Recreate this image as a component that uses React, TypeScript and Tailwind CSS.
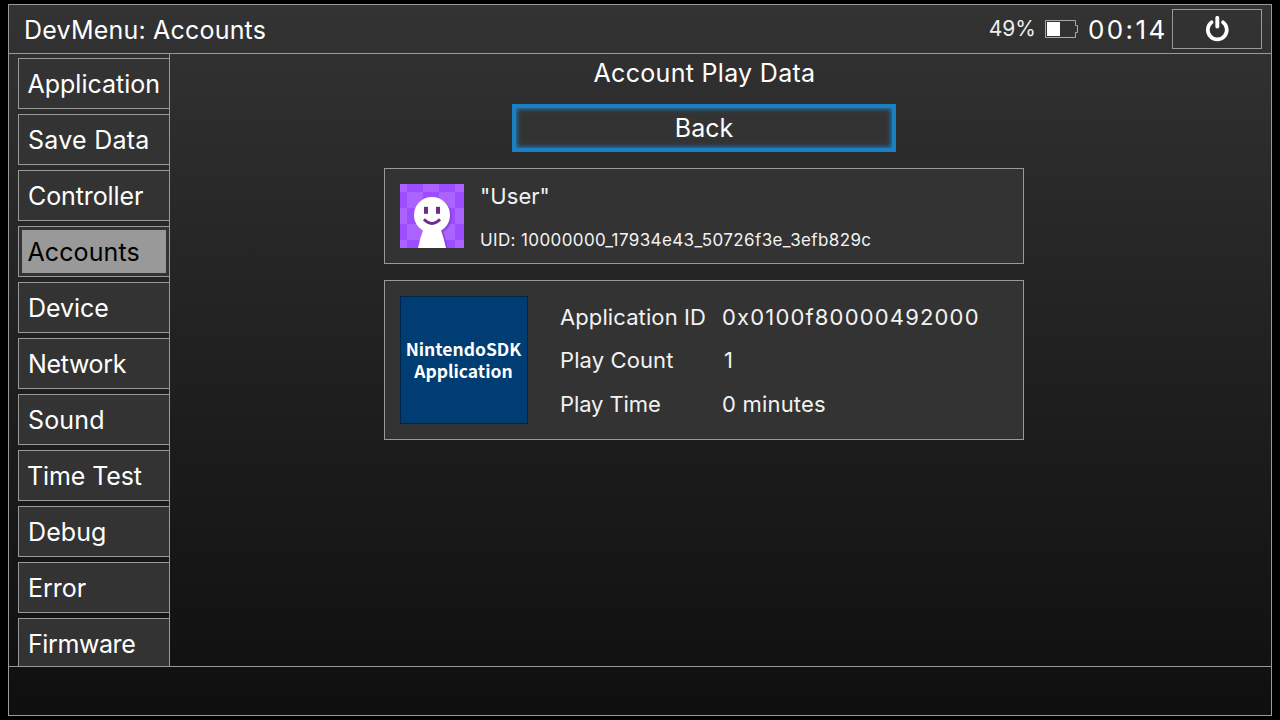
type Tab = { label: string; className: string };

const TABS: Tab[] = [
  { label: "Application", className: "tracking-[0px] pl-[8.5px]" },
  { label: "Save Data", className: "tracking-[0.25px] pl-[9px]" },
  { label: "Controller", className: "tracking-[-0.1px] pl-[9px]" },
  { label: "Accounts", className: "tracking-[0.1px] pl-[9px]" },
  { label: "Device", className: "tracking-[-0.05px] pl-[9px]" },
  { label: "Network", className: "tracking-[-0.35px] pl-[9px]" },
  { label: "Sound", className: "tracking-[0.15px] pl-[9px]" },
  { label: "Time Test", className: "tracking-[-0.1px] pl-2" },
  { label: "Debug", className: "tracking-[0.1px] pl-[9px]" },
  { label: "Error", className: "tracking-[0px] pl-[9px]" },
  { label: "Firmware", className: "tracking-[-0.4px] pl-[9px]" },
];

function Header() {
  return (
    <header className="flex h-[49px] shrink-0 items-center border-b border-[#999]">
      <h1 className="pt-0.5 pl-[15px] text-[25px] leading-8 tracking-[0.2px]">DevMenu: Accounts</h1>
      <div className="ml-auto flex items-center pr-[9px]">
        <span className="mr-[9px] text-[21px] leading-8 text-[#eee]">49%</span>
        <svg width="33" height="18" viewBox="0 0 33 18" className="mr-[10px]">
          <path d="M.5 .5H30.5V5.5H32.5V12.5H30.5V17.5H.5Z" fill="none" stroke="#aaa" />
          <rect x="2" y="2" width="13" height="14" fill="#fff" />
        </svg>
        <span className="w-[84px] pt-0.5 text-[26px] leading-8 tracking-[2.4px]">00:14</span>
        <button className="flex h-10 w-[90px] items-center justify-center border border-[#999]">
          <svg width="26" height="26" viewBox="0 0 26 26" fill="none" stroke="#fff" strokeLinecap="round">
            <path d="M7.6 6.3A9.5 9.5 0 1 0 19 6.3" strokeWidth="3.7" />
            <path d="M13.3 1.9V10.6" strokeWidth="3.9" />
          </svg>
        </button>
      </div>
    </header>
  );
}

function Sidebar() {
  return (
    <nav className="flex w-[161px] shrink-0 flex-col gap-[5px] overflow-hidden border-r border-[#999] pt-1 pl-[9px]">
      {TABS.map(({ label, className }) => (
        <div key={label} className="flex h-[51px] shrink-0 border border-r-0 border-[#999] bg-[#333]">
          {label === "Accounts" ? (
            <div className="m-[3px] flex flex-1 items-center bg-[#999] pt-0.5 pl-[5.5px] text-[25px] tracking-[0.1px] text-black">
              {label}
            </div>
          ) : (
            <div className={`flex items-center pt-0.5 text-[25px] whitespace-nowrap ${className}`}>{label}</div>
          )}
        </div>
      ))}
    </nav>
  );
}

function Avatar() {
  return (
    <svg width="64" height="64" viewBox="0 0 64 64">
      <defs>
        <pattern id="checks" x="-9" y="-8" width="32" height="32" patternUnits="userSpaceOnUse">
          <rect width="32" height="32" fill="#9b4dff" />
          <rect width="16" height="16" fill="#ab64ff" />
          <rect x="16" y="16" width="16" height="16" fill="#ab64ff" />
        </pattern>
      </defs>
      <rect width="64" height="64" fill="url(#checks)" />
      <g fill="#8a45dd" transform="translate(2 1.5)">
        <circle cx="32" cy="31" r="18" />
        <path d="M23 45H41Q44 54 46 64H18Q20 54 23 45Z" />
      </g>
      <circle cx="32" cy="31" r="18" fill="#fff" />
      <path d="M23.5 45H40.5Q44 54 46 64H18Q20 54 23.5 45Z" fill="#fff" />
      <g fill="#6e2a8c">
        <rect x="24" y="22.8" width="4" height="7" />
        <rect x="36" y="22.8" width="4" height="7" />
      </g>
      <path d="M24 35.2Q32 43.6 40 35.2" fill="none" stroke="#6e2a8c" strokeWidth="3" />
    </svg>
  );
}

function Content() {
  return (
    <main className="flex w-[1068px] flex-col items-center">
      <h2 className="mt-[3px] pl-px text-[25px] leading-8 tracking-[0.3px]">Account Play Data</h2>
      <button className="mt-[15px] h-12 w-96 border-4 border-[#1a80c2] bg-[#333] text-[25px] leading-10 tracking-[0px] shadow-[inset_0_0_4px_1px_#1a80c2]">
        Back
      </button>
      <section className="mt-4 flex h-24 w-[640px] border border-[#999] bg-[#333] p-[15px]">
        <Avatar />
        <div className="ml-4 text-[#f2f2f2]">
          <p className="-mt-1 text-[22px] leading-8 tracking-[0.05px]">"User"</p>
          <p className="mt-3 text-[17px] leading-8 tracking-[0.38px] whitespace-nowrap">
            UID: 10000000_17934e43_50726f3e_3efb829c
          </p>
        </div>
      </section>
      <section className="mt-4 flex h-40 w-[640px] border border-[#999] bg-[#333] p-[15px] text-[22px] text-[#f2f2f2]">
        <p className="flex size-32 items-center justify-center border border-[#00254a] bg-[#003d73] pr-px text-center font-['Noto_Sans_CJK_JP',sans-serif] text-[17.5px] leading-[22px] font-bold text-white">
          NintendoSDK Application
        </p>
        <dl className="ml-8 grid h-[130px] grid-cols-[162px_auto] grid-rows-[43px_43px_44px] items-center whitespace-nowrap">
          <dt className="tracking-[0.1px]">Application ID</dt>
          <dd className="tracking-[1.17px]">0x0100f80000492000</dd>
          <dt className="tracking-[0.1px]">Play Count</dt>
          <dd className="pl-0.5">1</dd>
          <dt className="tracking-[-0.1px]">Play Time</dt>
          <dd className="tracking-[0.2px]">0 minutes</dd>
        </dl>
      </section>
    </main>
  );
}

export default function App() {
  return (
    <div className="h-[720px] w-[1280px] overflow-hidden bg-black px-2 pt-1 pb-1 font-['Inter',sans-serif] text-white">
      <div className="flex h-[712px] flex-col border border-[#999] bg-linear-to-b from-[#333] to-[#0f0f0f]">
        <Header />
        <div className="flex h-[613px] shrink-0 overflow-hidden border-b border-[#999]">
          <Sidebar />
          <Content />
        </div>
      </div>
    </div>
  );
}
